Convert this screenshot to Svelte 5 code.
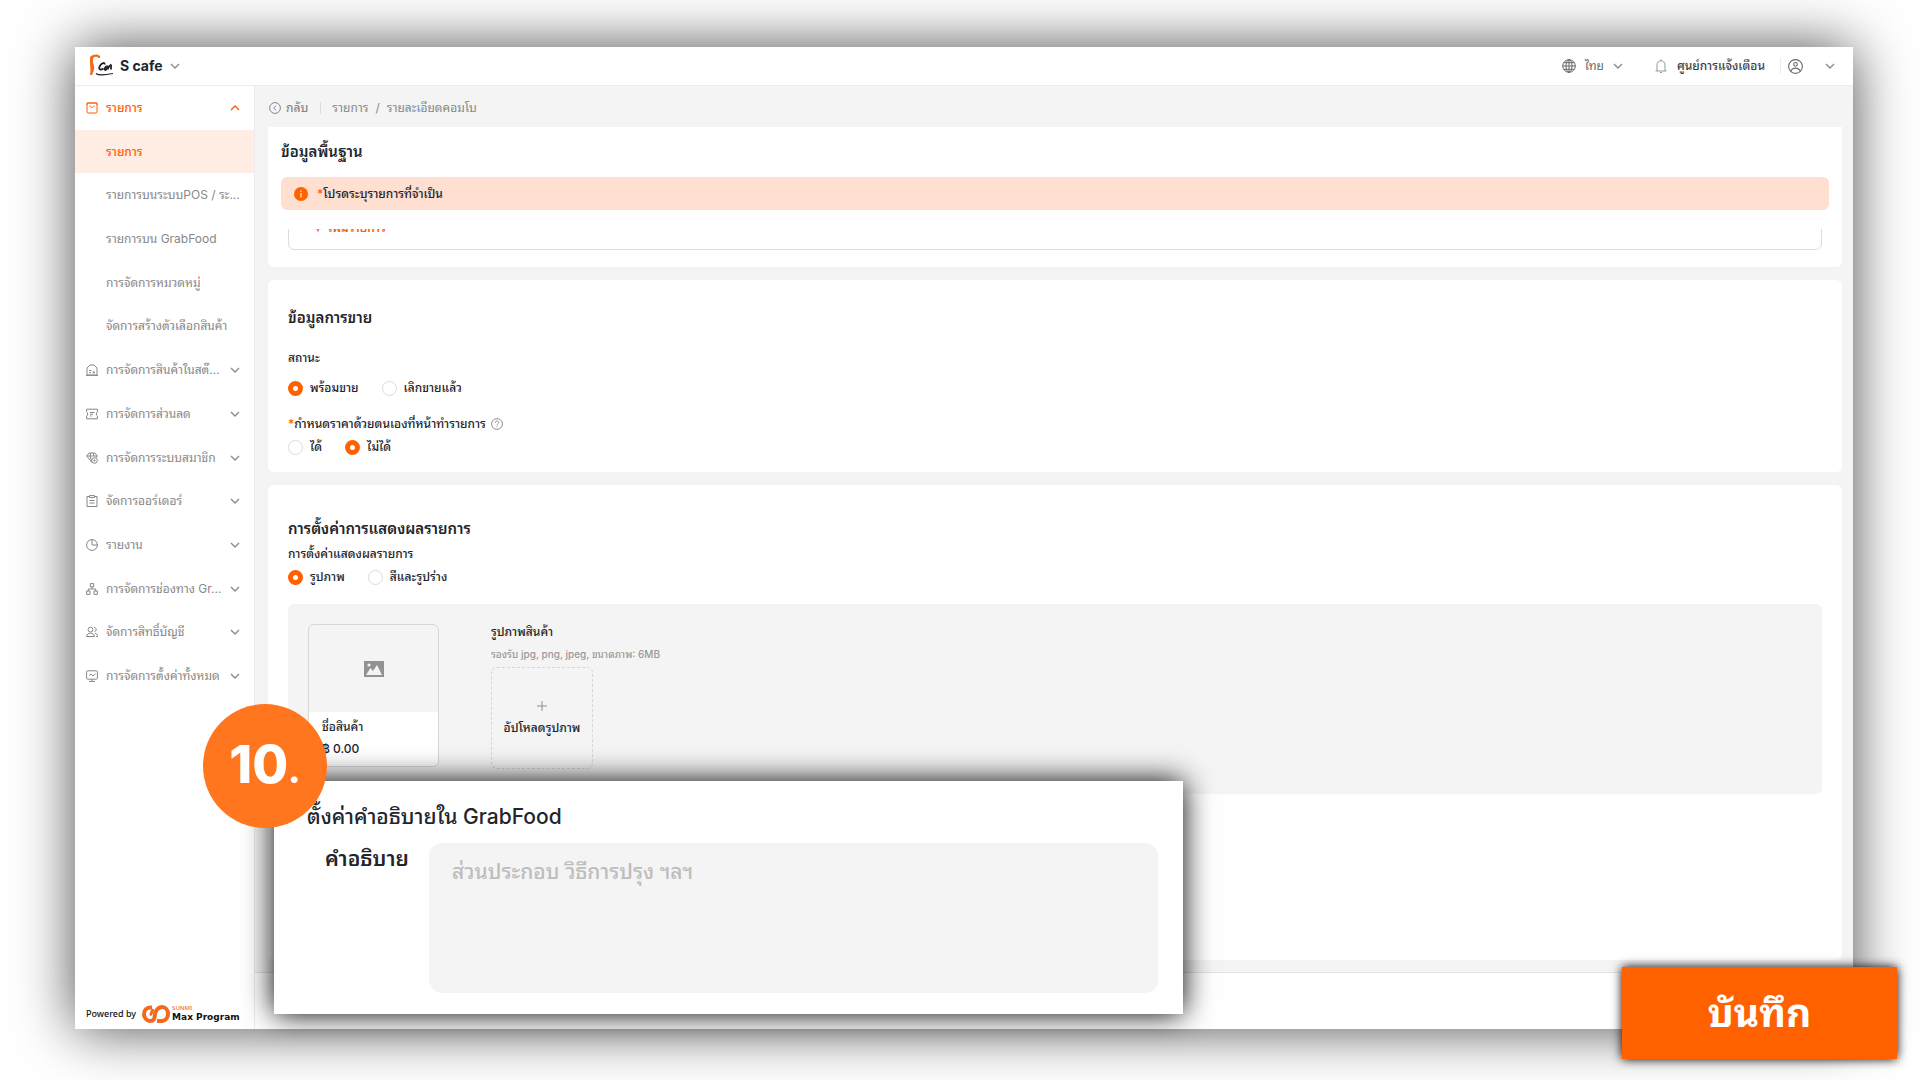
<script lang="ts">
	const menu = [
		{ label: "รายการ", icon: "bag", kind: "open" },
		{ label: "รายการ", kind: "sub active" },
		{ label: "รายการบนระบบPOS / ระ...", kind: "sub" },
		{ label: "รายการบน GrabFood", kind: "sub" },
		{ label: "การจัดการหมวดหมู่", kind: "sub" },
		{ label: "จัดการสร้างตัวเลือกสินค้า", kind: "sub" },
		{ label: "การจัดการสินค้าในสต๊...", icon: "store", kind: "group" },
		{ label: "การจัดการส่วนลด", icon: "coupon", kind: "group" },
		{ label: "การจัดการระบบสมาชิก", icon: "member", kind: "group" },
		{ label: "จัดการออร์เดอร์", icon: "order", kind: "group" },
		{ label: "รายงาน", icon: "report", kind: "group" },
		{ label: "การจัดการช่องทาง Gr...", icon: "channel", kind: "group" },
		{ label: "จัดการสิทธิ์บัญชี", icon: "users", kind: "group" },
		{ label: "การจัดการตั้งค่าทั้งหมด", icon: "settings", kind: "group" },
	];

	let status = $state("ready");
	let customPrice = $state("no");
	let display = $state("image");
	let description = $state("");
</script>

{#snippet chevron(up = false)}
	<svg class="chevron" viewBox="0 0 10 10" aria-hidden="true">
		<path d={up ? "M1 7l4-4 4 4" : "M1 3l4 4 4-4"} />
	</svg>
{/snippet}

{#snippet menuIcon(name: string)}
	<svg class="icon" viewBox="0 0 12 12" aria-hidden="true">
		{#if name === "bag"}
			<rect x="1" y="1" width="10" height="10" rx="1" />
			<path d="M1 3V1h10v2M4 3.5c0 2.6 4 2.6 4 0" />
		{:else if name === "store"}
			<path d="M1 11V4l3-3h4l3 3v7zM0 11.4h12" />
			<path d="M3 6.5h2.500M3 8.800h2M6.500 8.800h2.500M7.800 7v1.800" />
		{:else if name === "coupon"}
			<path d="M.6 1.2h10.800v2.600c-1.400.3-1.400 3.900 0 4.200v2.800H.6V8c1.400-.4 1.400-3.800 0-4.200z" />
			<path d="M4 4.500h4.500M4 6.300h3M4 8h1.500" />
		{:else if name === "member"}
			<path d="M3 1h6l2.300 3L6 10.500.7 4zM.7 4h10.600M4 4l2 6M4 4l1-3M8 4L7 1" />
			<circle cx="8.5" cy="8.5" r="2.8" class="solid" />
			<path d="M8.500 7.500v2M7.500 8.500h2" />
		{:else if name === "order"}
			<path d="M3.500 1.500H1v10h10v-10H8.500M3.500.6h5v2h-5zM3.500 5.500h5M3.500 8h5" />
		{:else if name === "report"}
			<circle cx="6" cy="6" r="5.4" />
			<path d="M6 .6V6h5.400" />
		{:else if name === "channel"}
			<path d="M4.300.6h3.400v3.200H4.300zM.6 8H4v3.400H.6zM8 8h3.400v3.400H8zM6 4v2M2.300 8V6h7.400v2" />
		{:else if name === "users"}
			<circle cx="4.500" cy="3.600" r="2.400" />
			<path d="M.6 10.500c0-4.500 7.800-4.500 7.800 0zM8 1.400c2.800 0 2.800 4 .5 4.200M9 7.200c1.600.3 2.500 1.300 2.500 3.300H10" />
		{:else}
			<rect x=".6" y=".8" width="10.800" height="8.400" rx="1" />
			<path d="M3 5.500L5 4l2 2 2.500-2.500M6 9.200v2M3 11.400h6" />
		{/if}
	</svg>
{/snippet}

<div class="stage">
	<div class="window">
		<header>
			<button class="shop">
				<svg class="shop-logo" viewBox="0 0 24 24" aria-hidden="true">
					<path d="M1 3C3 0 9-.5 11 2c1 2-2 3-2.500 1C6 2 4 3 4 6c-.500 4 2 5 1 10L3 21H1c1-5 0-8 0-12z" fill="#f36a21" />
					<path d="M15.500 10.500c.5-2.500-2.500-1.500-4 .5-2.500 3.500-1 6 3 3.500M18.500 12.500c-2-1-4 3.500-2 3.500 1 0 2-3 2.500-4v3.500m.5-2c1.500-3 3-3.500 2.500-.5v2.500" fill="none" stroke="#1d2027" stroke-width="1.800" />
					<path d="M7 19.500c3 2.500 9 1.500 17 0" fill="none" stroke="#1d2027" stroke-width="1.200" />
				</svg>
				<strong>S cafe</strong>
				{@render chevron()}
			</button>
			<div class="tools">
				<button class="language">
					<svg class="tool-icon" viewBox="0 0 14 14" aria-hidden="true">
						<circle cx="7" cy="7" r="6.300" />
						<ellipse cx="7" cy="7" rx="3" ry="6.300" />
						<path d="M7 .7v12.600M.7 7h12.600M1.700 3.700h10.600M1.700 10.300h10.600" />
					</svg>
					<span>ไทย</span>
					{@render chevron()}
				</button>
				<button class="notice">
					<svg class="tool-icon light" viewBox="0 0 14 14" aria-hidden="true">
						<path d="M1.500 12h11M3 12V6c0-5.600 8-5.600 8 0v6M7 .2v1.500M6 13.500h2" />
					</svg>
					<span>ศูนย์การแจ้งเตือน</span>
				</button>
				<button class="account" aria-label="บัญชี">
					<svg class="account-icon" viewBox="0 0 14 14" aria-hidden="true">
						<circle cx="7" cy="7" r="6.400" />
						<circle cx="7" cy="5" r="1.700" />
						<path d="M2.500 11.500c1.500-4 7.500-4 9 0" />
					</svg>
					{@render chevron()}
				</button>
			</div>
		</header>

		<div class="body">
			<aside>
				<nav>
					{#each menu as item, i (i)}
						<a href="#menu-{i}" class={item.kind}>
							{#if item.icon}
								{@render menuIcon(item.icon)}
							{/if}
							<span>{item.label}</span>
							{#if item.icon}
								{@render chevron(item.kind === "open")}
							{/if}
						</a>
					{/each}
				</nav>
				<div class="powered">
					<span>Powered by</span>
					<svg class="max-logo" viewBox="0 0 28 18" aria-hidden="true">
						<path d="M10 2.500C5 2 2 5 2 9s3 7 6 7c6 0 4-5 5.500-9C15 4 17 2 20 2c3.500 0 6 3 6 7s-3 7-6 7h-5" fill="none" stroke="#f26a1f" stroke-width="4" />
						<path d="M8 10c2-1 1.500-3.500 3-6" fill="none" stroke="#f26a1f" stroke-width="3" />
					</svg>
					<div class="brand">
						<small>SUNMI</small>
						<strong>Max Program</strong>
					</div>
				</div>
			</aside>

			<main>
				<div class="crumbs">
					<a href="#back" class="back">
						<svg viewBox="0 0 12 12" aria-hidden="true">
							<circle cx="6" cy="6" r="5.400" />
							<path d="M7 3.700L4.700 6 7 8.300" />
						</svg>
						กลับ
					</a>
					<a href="#items" class="parent">รายการ</a>
					<span>/</span>
					<span>รายละเอียดคอมโบ</span>
				</div>

				<section class="card basic">
					<h2>ข้อมูลพื้นฐาน</h2>
					<div class="alert">
						<svg viewBox="0 0 14 14" aria-hidden="true">
							<circle cx="7" cy="7" r="7" fill="#ff6100" />
							<path d="M7 3.500v1.500M7 6v4.500" stroke="#ffdfd0" stroke-width="1.400" />
						</svg>
						<p><i>*</i>โปรดระบุรายการที่จำเป็น</p>
					</div>
					<div class="scrolled">
						<div class="add-box"><button>+&nbsp; เพิ่มรายการ</button></div>
					</div>
				</section>

				<section class="card sales">
					<h2>ข้อมูลการขาย</h2>
					<fieldset>
						<legend>สถานะ</legend>
						<div class="radios">
							<label><input type="radio" value="ready" bind:group={status} />พร้อมขาย</label>
							<label><input type="radio" value="ended" bind:group={status} />เลิกขายแล้ว</label>
						</div>
					</fieldset>
					<fieldset class="price">
						<legend>
							<i>*</i>กำหนดราคาด้วยตนเองที่หน้าทำรายการ
							<svg viewBox="0 0 12 12" aria-hidden="true">
								<circle cx="6" cy="6" r="5.400" />
								<path d="M4.300 4.800c0-2.400 3.400-2.400 3.400-.2C7.700 5.800 6 5.800 6 7.200M6 8.300v1" />
							</svg>
						</legend>
						<div class="radios">
							<label><input type="radio" value="yes" bind:group={customPrice} />ได้</label>
							<label><input type="radio" value="no" bind:group={customPrice} />ไม่ได้</label>
						</div>
					</fieldset>
				</section>

				<section class="card display">
					<h2>การตั้งค่าการแสดงผลรายการ</h2>
					<fieldset class="mode">
						<legend>การตั้งค่าแสดงผลรายการ</legend>
						<div class="radios">
							<label><input type="radio" value="image" bind:group={display} />รูปภาพ</label>
							<label><input type="radio" value="color" bind:group={display} />สีและรูปร่าง</label>
						</div>
					</fieldset>
					<div class="preview">
						<div class="product">
							<div class="thumb">
								<svg viewBox="0 0 20 16" aria-hidden="true">
									<path d="M0 0h20v16H0z" fill="#929292" />
									<path d="M2 14l4.500-7 2.500 3 4-6 5 10z" fill="#f4f4f4" />
									<circle cx="5" cy="4" r="1.600" fill="#f4f4f4" />
								</svg>
							</div>
							<div class="product-info">
								<b>ชื่อสินค้า</b>
								<span>฿ 0.00</span>
							</div>
						</div>
						<div class="picture">
							<b>รูปภาพสินค้า</b>
							<small>รองรับ jpg, png, jpeg, ขนาดภาพ: 6MB</small>
							<button class="upload">
								<svg viewBox="0 0 10 10" aria-hidden="true"><path d="M5 0v10M0 5h10" /></svg>
								อัปโหลดรูปภาพ
							</button>
						</div>
					</div>
				</section>

				<footer></footer>
			</main>
		</div>
	</div>

	<div class="callout">
		<h3>ตั้งค่าคำอธิบายใน GrabFood</h3>
		<div class="field">
			<label for="description">คำอธิบาย</label>
			<textarea id="description" placeholder="ส่วนประกอบ วิธีการปรุง ฯลฯ" bind:value={description}></textarea>
		</div>
	</div>
	<div class="step">10<span>.</span></div>
	<button class="save">บันทึก</button>
</div>

<style>
	:global(body) {
		background: #fff;
	}

	.stage {
		box-sizing: border-box;
		color: #22252c;
		display: flex;
		font-family: Inter, "Noto Sans Thai Looped", "Noto Sans Thai", "Noto Sans", sans-serif;
		font-size: 12px;
		line-height: 16px;
		min-height: 100vh;
		overflow: hidden;
		padding: 47px 67px 51px 75px;
		position: relative;
	}

	.stage :global(*) {
		box-sizing: border-box;
	}

	button {
		align-items: center;
		background: none;
		border: none;
		color: inherit;
		display: flex;
		font: inherit;
		padding: 0;
	}

	a {
		color: inherit;
		text-decoration: none;
	}

	svg {
		fill: none;
		flex: none;
		stroke: currentColor;
	}

	i {
		color: #ff6100;
		font-style: normal;
	}

	h2,
	h3,
	p {
		margin: 0;
	}

	.window {
		background: #fff;
		box-shadow: 0 0 54px rgba(0, 0, 0, 0.7);
		display: flex;
		flex: 1;
		flex-direction: column;
	}

	header {
		align-items: center;
		border-bottom: 1px solid #ececec;
		display: flex;
		height: 39px;
		justify-content: space-between;
		padding: 0 18px 0 14px;
	}

	.shop strong {
		font-size: 14px;
		margin: 0 7px;
	}

	.shop-logo {
		height: 24px;
		stroke: none;
		width: 24px;
	}

	.chevron {
		color: #8c8c8c;
		height: 10px;
		stroke-width: 1.4;
		width: 10px;
	}

	.tools {
		color: #666;
		display: flex;
	}

	.tool-icon {
		height: 14px;
		width: 14px;
	}

	.light {
		color: #999;
	}

	.language,
	.notice {
		gap: 9px;
	}

	.notice {
		border-right: 1px solid #ececec;
		color: #3a3d44;
		font-weight: 500;
		margin-left: 31px;
		padding-right: 15px;
	}

	.account {
		gap: 22px;
		margin-left: 7px;
	}

	.account-icon {
		height: 15px;
		width: 15px;
	}

	.body {
		display: flex;
		flex: 1;
	}

	aside {
		border-right: 1px solid #ececec;
		color: #878787;
		display: flex;
		flex: none;
		flex-direction: column;
		justify-content: space-between;
		width: 180px;
	}

	nav {
		display: grid;
		grid-auto-rows: 1fr;
		height: 612px;
	}

	nav a {
		align-items: center;
		display: flex;
		gap: 8px;
		padding: 0 14px 0 11px;
		white-space: nowrap;
	}

	nav .chevron {
		margin-left: auto;
	}

	nav .sub {
		padding-left: 31px;
	}

	.icon {
		height: 12px;
		width: 12px;
	}

	.solid {
		fill: #fff;
	}

	.open,
	.active {
		color: #ff6100;
		font-weight: 500;
	}

	.open .chevron {
		color: #ff6100;
	}

	.active {
		background: #ffece3;
	}

	.powered {
		align-items: center;
		color: #111;
		display: flex;
		font-family: "Noto Sans", sans-serif;
		font-size: 9px;
		font-weight: 500;
		gap: 6px;
		padding: 0 0 6px 11px;
	}

	.max-logo {
		height: 18px;
		width: 28px;
	}

	.brand {
		display: flex;
		flex-direction: column;
		margin-left: -4px;
	}

	.brand small {
		color: #f26a1f;
		font-size: 6px;
		line-height: 5px;
	}

	.brand strong {
		font-family: "DejaVu Sans", sans-serif;
		font-size: 9px;
		line-height: 12px;
	}

	main {
		background: #f4f4f4;
		display: flex;
		flex: 1;
		flex-direction: column;
	}

	.crumbs {
		align-items: center;
		color: #878787;
		display: flex;
		gap: 7px;
		height: 41px;
		padding: 3px 0 0 14px;
	}

	.back {
		align-items: center;
		border-right: 1px solid #dcdcdc;
		display: flex;
		font-weight: 500;
		gap: 5px;
		line-height: 12px;
		padding-right: 12px;
	}

	.back svg {
		height: 12px;
		width: 12px;
	}

	.parent {
		margin-left: 4px;
	}

	.card {
		background: #fff;
		border-radius: 6px;
		margin: 0 11px 13px 13px;
		padding: 0 20px;
	}

	h2 {
		font-size: 15px;
		font-weight: 600;
		line-height: 24px;
	}

	.basic {
		border-radius: 0 0 6px 6px;
		height: 140px;
		padding: 13px 13px 0;
	}

	.alert {
		align-items: center;
		background: #ffdfd0;
		border-radius: 6px;
		display: flex;
		font-weight: 500;
		gap: 9px;
		height: 33px;
		margin-top: 13px;
		padding-left: 13px;
	}

	.alert svg {
		height: 14px;
		stroke: none;
		width: 14px;
	}

	.scrolled {
		display: flex;
		flex-direction: column;
		height: 21px;
		justify-content: flex-end;
		margin: 19px 7px 0;
		overflow: hidden;
	}

	.add-box {
		border: 1px solid #dcdcdc;
		border-radius: 6px;
		color: #ff6100;
		flex: none;
		font-weight: 600;
		padding: 16px 25px 13px;
	}

	.sales {
		height: 192px;
		padding-top: 26px;
	}

	fieldset {
		border: none;
		margin: 20px 0 0;
		padding: 0;
	}

	legend {
		align-items: center;
		display: flex;
		font-weight: 500;
		height: 16px;
		padding: 0;
	}

	legend svg {
		color: #8f8f8f;
		height: 12px;
		margin-left: 5px;
		width: 12px;
	}

	.radios {
		display: flex;
		gap: 23px;
		padding-top: 14px;
	}

	.radios label {
		align-items: center;
		display: flex;
		font-weight: 500;
		gap: 7px;
	}

	.radios input {
		appearance: none;
		background: #fff;
		border: 1px solid #dcdcdc;
		border-radius: 50%;
		height: 15px;
		margin: 0;
		width: 15px;
	}

	.radios input:checked {
		border: 5px solid #ff6100;
	}

	.price .radios,
	.mode .radios {
		padding-top: 7px;
	}

	.display {
		flex: 1;
		margin-bottom: 12px;
		padding-top: 32px;
	}

	.mode {
		margin-top: 5px;
	}

	.preview {
		background: #f4f4f4;
		border-radius: 6px;
		display: flex;
		gap: 52px;
		height: 190px;
		margin-top: 19px;
		padding: 20px;
	}

	.product {
		align-self: flex-start;
		border: 1px solid #d6d6d6;
		border-radius: 6px;
		overflow: hidden;
		width: 131px;
	}

	.thumb {
		display: grid;
		height: 87px;
		place-content: center;
	}

	.thumb svg {
		height: 16px;
		stroke: none;
		width: 20px;
	}

	.product-info {
		background: #fff;
		display: flex;
		flex-direction: column;
		font-weight: 500;
		gap: 6px;
		padding: 7px 13px 9px;
	}

	b {
		font-weight: 500;
	}

	.picture {
		display: flex;
		flex-direction: column;
	}

	.picture small {
		color: #999;
		font-size: 10px;
		font-weight: 500;
		margin: 6px 0 5px;
	}

	.upload {
		border: 1px dashed #d6d6d6;
		border-radius: 6px;
		flex-direction: column;
		font-weight: 500;
		gap: 9px;
		height: 102px;
		justify-content: center;
		width: 102px;
	}

	.upload svg {
		color: #8f8f8f;
		height: 10px;
		width: 10px;
	}

	footer {
		background: #fff;
		border-top: 1px solid #e2e2e2;
		height: 57px;
	}

	.callout {
		background: #fff;
		bottom: 66px;
		box-shadow: 0 0 28px #000;
		height: 233px;
		left: 274px;
		padding: 20px 25px 21px 33px;
		position: absolute;
		width: 909px;
	}

	h3 {
		font-size: 21px;
		font-weight: 500;
		line-height: 32px;
	}

	.field {
		display: flex;
		gap: 23px;
		margin-top: 10px;
		padding-left: 18px;
	}

	.field label {
		font-size: 21px;
		font-weight: 600;
		line-height: 32px;
		white-space: nowrap;
		width: 81px;
	}

	textarea {
		background: #f4f4f4;
		border: none;
		border-radius: 13px;
		flex: 1;
		font: inherit;
		font-size: 21px;
		font-weight: 500;
		height: 150px;
		line-height: 32px;
		padding: 13px 23px;
		resize: none;
	}

	textarea::placeholder {
		color: #bdbdbd;
	}

	.step {
		align-items: baseline;
		background: #ff761f;
		border-radius: 50%;
		bottom: 252px;
		color: #fff;
		display: flex;
		font-size: 52px;
		font-weight: 800;
		height: 124px;
		justify-content: center;
		left: 203px;
		line-height: 121px;
		position: absolute;
		width: 124px;
	}

	.step span {
		font-size: 36px;
	}

	.save {
		background: #ff6100;
		bottom: 21px;
		box-shadow: 0 0 10px #000;
		color: #fff;
		font-size: 39px;
		font-weight: 700;
		height: 92px;
		justify-content: center;
		position: absolute;
		right: 23px;
		width: 275px;
	}
</style>
